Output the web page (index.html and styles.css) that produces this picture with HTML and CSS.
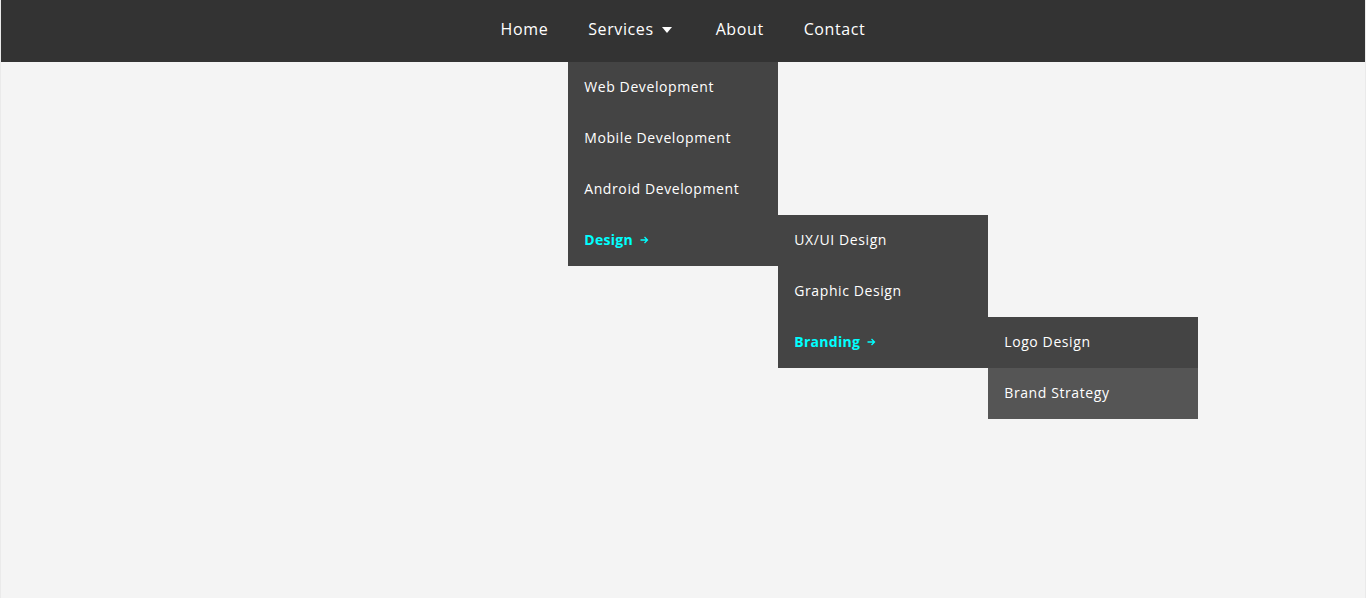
FILE: index.html
```html
<!DOCTYPE html>
<html lang="en">
<head>
    <meta charset="UTF-8">
    <meta name="viewport" content="width=device-width, initial-scale=1.0">
    <title>Dropdown Menu</title>
    <link rel="stylesheet" href="styles.css">
</head>
<body>
    <nav class="navbar">
        <ul class="menu">
            <li class="menu-item"><a href="#">Home</a></li>
            <li class="menu-item has-dropdown">
                <a href="#">Services
                    <svg class="caret" width="10" height="6" viewBox="0 0 10 6"><path d="M0 0h10L5 6z" fill="#fff"/></svg>
                </a>
                <ul class="dropdown">
                    <li><a href="#">Web Development</a></li>
                    <li><a href="#">Mobile Development</a></li>
                    <li><a href="#">Android Development</a></li>
                    <li class="has-sub open">
                        <a href="#">Design
                            <svg class="arrow" width="9" height="8" viewBox="0 0 9 8"><path d="M0.5 4h7M4.5 1l3 3-3 3" fill="none" stroke="#00ffff" stroke-width="1.3"/></svg>
                        </a>
                        <ul class="dropdown sub">
                            <li><a href="#">UX/UI Design</a></li>
                            <li><a href="#">Graphic Design</a></li>
                            <li class="has-sub open">
                                <a href="#">Branding
                                    <svg class="arrow" width="9" height="8" viewBox="0 0 9 8"><path d="M0.5 4h7M4.5 1l3 3-3 3" fill="none" stroke="#00ffff" stroke-width="1.3"/></svg>
                                </a>
                                <ul class="dropdown sub">
                                    <li><a href="#">Logo Design</a></li>
                                    <li class="hover"><a href="#">Brand Strategy</a></li>
                                </ul>
                            </li>
                        </ul>
                    </li>
                </ul>
            </li>
            <li class="menu-item"><a href="#">About</a></li>
            <li class="menu-item"><a href="#">Contact</a></li>
        </ul>
    </nav>
</body>
</html>
```

FILE: styles.css
```css
* {
    box-sizing: border-box;
}

body {
    font-family: "Open Sans", "DejaVu Sans", sans-serif;
    background-color: #f4f4f4;
    margin: 0;
    height: 100vh;
    border-left: 1px solid #eaeaea;
    border-right: 1px solid #eaeaea;
}

.navbar {
    background-color: #333;
    height: 62px;
    border-left: 1px solid #4a4a4a;
    border-right: 1px solid #4a4a4a;
    margin: 0 -1px;
}

.menu {
    list-style: none;
    margin: 0;
    padding: 0;
    display: flex;
    justify-content: center;
    height: 100%;
}

.menu-item {
    position: relative;
}

.menu-item > a {
    display: flex;
    align-items: center;
    height: 62px;
    padding: 0 20px 4px;
    color: #fff;
    text-decoration: none;
    font-size: 16px;
    font-weight: 500;
    letter-spacing: 0.6px;
}

.caret {
    margin: 2px 4px 0 8px;
}

.dropdown {
    list-style: none;
    margin: 0;
    padding: 0;
    position: absolute;
    top: 100%;
    left: 0;
    width: 210px;
    background-color: #444;
}

.dropdown.sub {
    top: 0;
    left: 100%;
}

.dropdown li {
    position: relative;
}

.dropdown a {
    display: flex;
    align-items: center;
    height: 51px;
    padding: 0 16px 2px;
    color: #fff;
    text-decoration: none;
    font-size: 14px;
    font-weight: 500;
    letter-spacing: 0.6px;
}

.dropdown li.hover > a {
    background-color: #555;
}

.has-sub.open > a {
    color: #00ffff;
    font-weight: 700;
    letter-spacing: 0.3px;
}

.arrow {
    margin-left: 7px;
}
```
